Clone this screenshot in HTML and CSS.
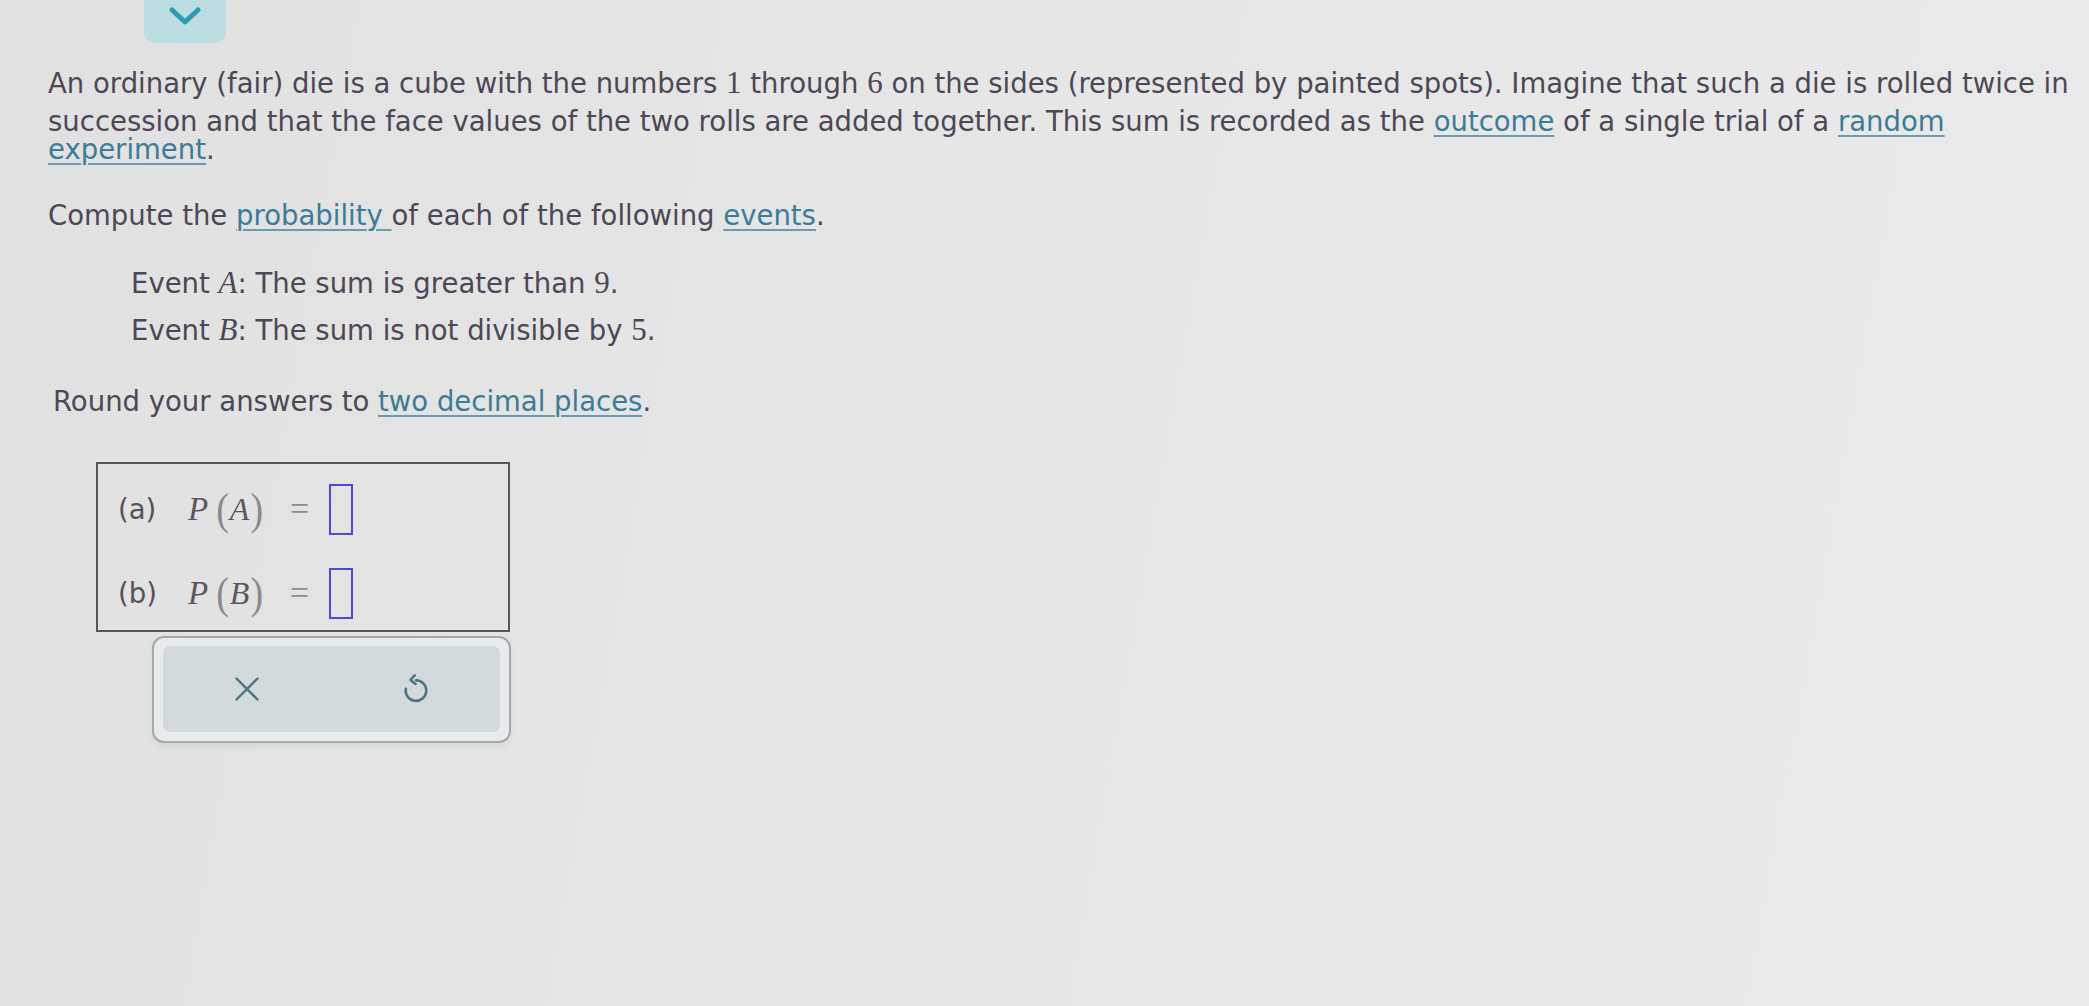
FILE: index.html
```html
<!DOCTYPE html>
<html lang="en">
<head>
<meta charset="utf-8">
<title>Probability of dice sums</title>
<link rel="stylesheet" href="styles.css">
</head>
<body>
<div class="page">
  <div class="tab">
    <svg class="chev" viewBox="0 0 34 20" width="34" height="20"><path d="M4 4 L17 16 L30 4" /></svg>
  </div>

  <p class="para">An ordinary (fair) die is a cube with the numbers <span class="m deep">1</span> through <span class="m deep">6</span> on the sides (represented by painted spots). Imagine that such a die is rolled twice in<br>succession and that the face values of the two rolls are added together. This sum is recorded as the <a class="lnk">outcome</a> of a single trial of a <a class="lnk">random</a><br><a class="lnk">experiment</a>.</p>

  <p class="compute">Compute the <a class="lnk">probability </a> of each of the following <a class="lnk">events</a>.</p>

  <div class="events">
    <div class="ev">Event <i class="mv">A</i>: The sum is greater than <span class="m">9</span>.</div>
    <div class="ev">Event <i class="mv">B</i>: The sum is not divisible by <span class="m">5</span>.</div>
  </div>

  <p class="round">Round your answers to <a class="lnk">two decimal places</a>.</p>

  <div class="answers">
    <div class="row">
      <span class="lbl">(a)</span>
      <span class="expr"><i class="pv">P</i><span class="par">(</span><i class="av">A</i><span class="par">)</span></span>
      <span class="eq">=</span>
      <span class="inp"></span>
    </div>
    <div class="row">
      <span class="lbl">(b)</span>
      <span class="expr"><i class="pv">P</i><span class="par">(</span><i class="av">B</i><span class="par">)</span></span>
      <span class="eq">=</span>
      <span class="inp"></span>
    </div>
  </div>

  <div class="panel">
    <div class="inner">
      <button class="btn" aria-label="Clear">
        <svg viewBox="0 0 24 24" width="36" height="36"><path d="M5 5 L19 19 M19 5 L5 19"/></svg>
      </button>
      <button class="btn" aria-label="Undo">
        <svg viewBox="0 0 24 24" width="38" height="38"><path d="M12 6.5 A6.5 6.5 0 1 1 5.6 11.8"/><path d="M11.2 3.4 L8.5 6.3 L11.8 8.8"/></svg>
      </button>
    </div>
  </div>
</div>
</body>
</html>
```

FILE: styles.css
```css
html, body {
  margin: 0;
  padding: 0;
}
body {
  width: 2089px;
  height: 1006px;
  overflow: hidden;
  background: linear-gradient(100deg, #e0e1e0 0%, #e6e6e6 40%, #ebeaea 100%);
  font-family: "DejaVu Sans", Verdana, sans-serif;
  font-size: 27.5px;
  color: #4c4856;
}
.page {
  padding-left: 48px;
}
.tab {
  margin-left: 96px;
  width: 82px;
  height: 43px;
  background: #bcdde2;
  border-radius: 0 0 11px 11px;
  display: flex;
  justify-content: center;
  align-items: flex-start;
}
.chev {
  margin-top: 6px;
}
.chev path {
  fill: none;
  stroke: #2e9bb5;
  stroke-width: 5;
  stroke-linecap: round;
  stroke-linejoin: round;
}
.para {
  margin: 26px 0 0 0;
  line-height: 28px;
  white-space: nowrap;
}
.m {
  font-family: "Liberation Serif", "Times New Roman", serif;
  font-size: 31px;
}
.deep {
  display: inline-block;
  padding-bottom: 10px;
  line-height: 28px;
  vertical-align: top;
}
.mv {
  font-family: "Liberation Serif", "Times New Roman", serif;
  font-size: 31px;
}
.lnk {
  color: #3b7c98;
  text-decoration: underline;
  text-decoration-color: #6b9bb0;
  text-underline-offset: 4px;
  text-decoration-thickness: 2px;
}
.compute {
  margin: 38px 0 0 0;
  line-height: 28px;
}
.events {
  margin: 40px 0 0 83px;
  display: flex;
  flex-direction: column;
  gap: 19px;
}
.ev {
  line-height: 28px;
}
.round {
  margin: 43px 0 0 5px;
  line-height: 28px;
}
.answers {
  margin: 47px 0 0 48px;
  border: 2px solid #57555c;
  display: flex;
  flex-direction: column;
  gap: 32px;
  padding-top: 19px;
  box-sizing: border-box;
  height: 170px;
  width: 414px;
}
.row {
  height: 52px;
  display: flex;
  align-items: center;
  padding-left: 20px;
}
.lbl {
  width: 70px;
  color: #55525a;
}
.expr {
  display: flex;
  align-items: center;
  font-family: "Liberation Serif", "Times New Roman", serif;
  color: #5a5760;
}
.pv {
  font-size: 33px;
  margin-right: 8px;
}
.av {
  font-size: 32px;
  margin: 0 1px;
}
.par {
  font-size: 38px;
  color: #8c8a90;
  transform: scaleY(1.15);
  display: inline-block;
}
.eq {
  font-family: "Liberation Serif", "Times New Roman", serif;
  font-size: 34px;
  color: #8e8c92;
  margin-left: 27px;
  margin-right: 20px;
}
.inp {
  width: 20px;
  height: 47px;
  border: 2px solid #4b4bd0;
}
.panel {
  margin: 4px 0 0 104px;
  width: 359px;
  height: 107px;
  box-sizing: border-box;
  border: 2px solid #a3aaac;
  border-radius: 12px;
  background: #e8ebeb;
  padding: 8px 9px 9px 9px;
  box-shadow: 0 3px 6px rgba(0,0,0,0.06);
}
.inner {
  height: 100%;
  background: #d3dadb;
  border-radius: 7px;
  display: flex;
}
.btn {
  flex: 1;
  border: 0;
  background: transparent;
  padding: 0;
  display: flex;
  align-items: center;
  justify-content: center;
}
.btn svg path {
  fill: none;
  stroke: #4b7580;
  stroke-width: 1.6;
  stroke-linecap: round;
  stroke-linejoin: round;
}
```
